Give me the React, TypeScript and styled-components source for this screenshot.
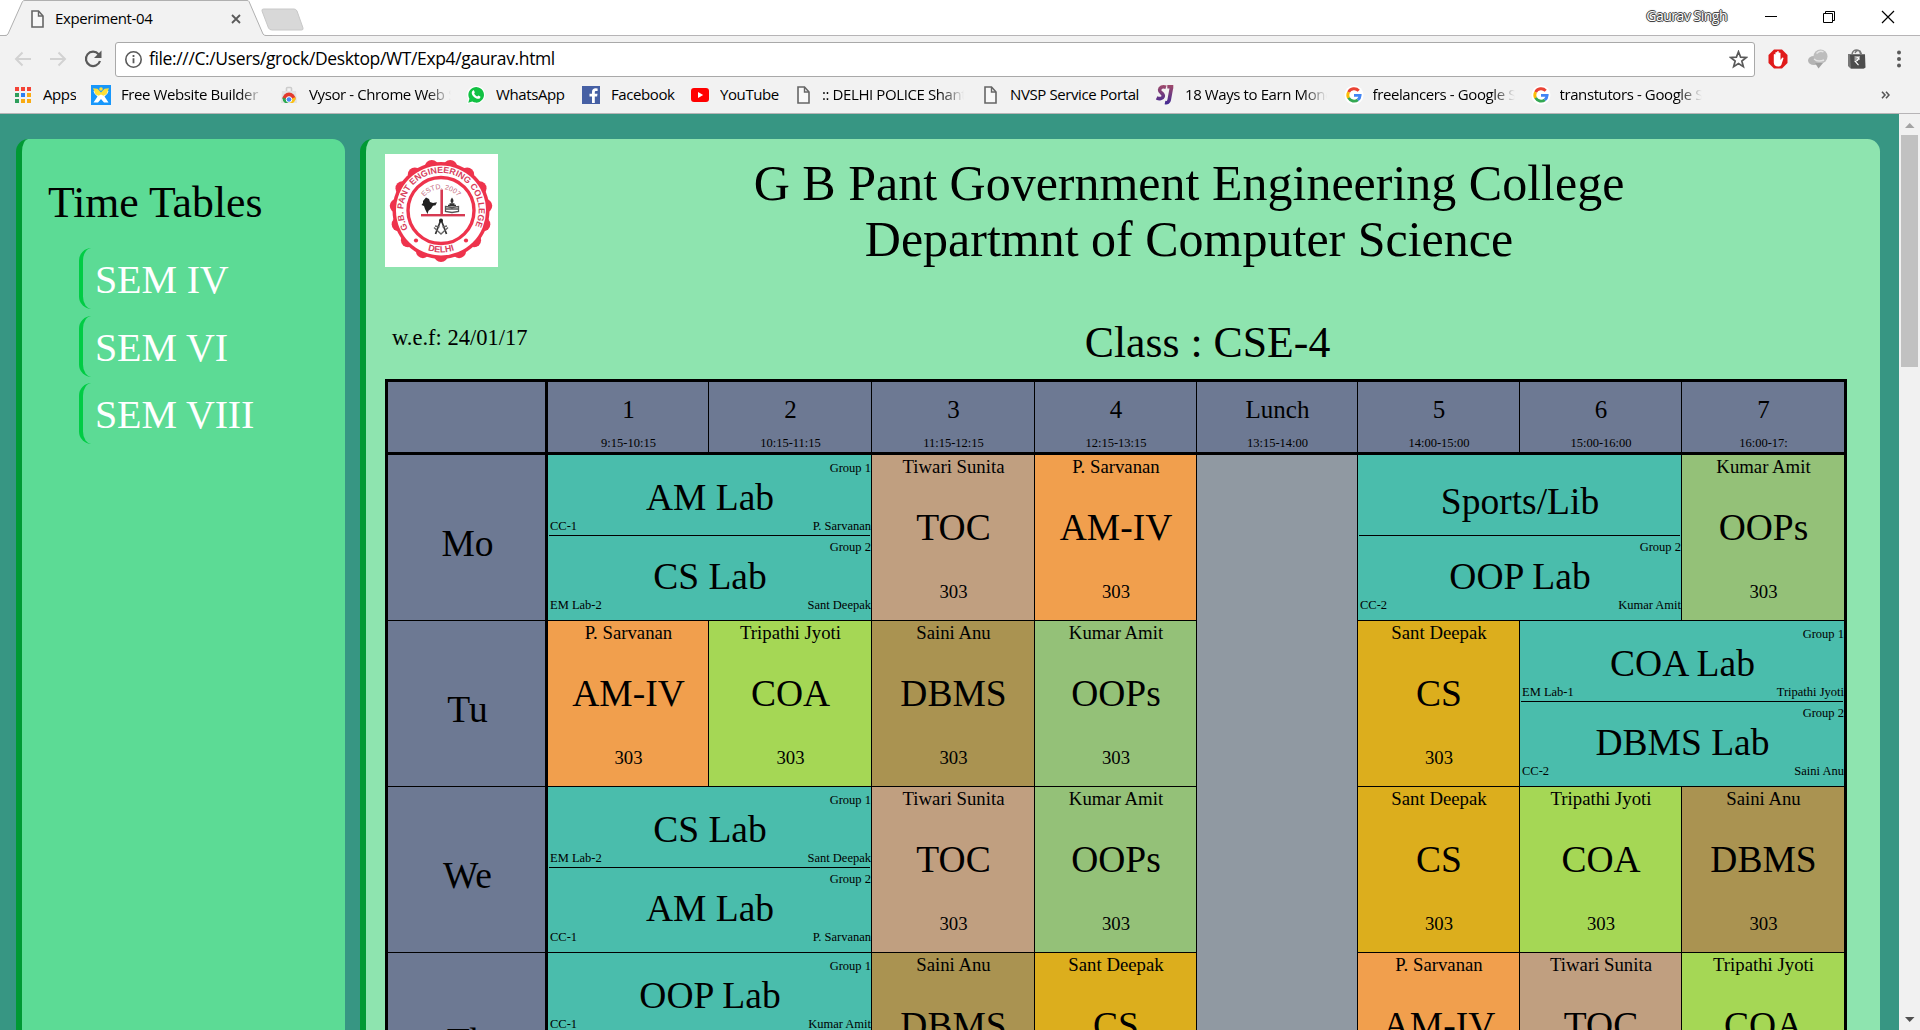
import React from "react";
import styled, { createGlobalStyle } from "styled-components";

const GlobalStyle = createGlobalStyle`
  *, *::before, *::after { box-sizing: border-box; }
  html, body { margin: 0; padding: 0; overflow: hidden; }
  body { font-family: "Liberation Serif", "Times New Roman", serif; color: #000; }
`;

const UI_FONT = `"Open Sans", "Noto Sans", sans-serif`;

const Window = styled.div`
  width: 1920px;
  height: 1030px;
  display: flex;
  flex-direction: column;
  overflow: hidden;
  background: #f2f2f2;
`;

/* ---------- Browser chrome ---------- */

const TabStrip = styled.div`
  display: flex;
  height: 36px;
  flex: none;
  background: #fff;
  box-shadow: inset 0 -1px 0 #b6b4b6;
  font-family: ${UI_FONT};
`;

const Tab = styled.div`
  position: relative;
  width: 272px;
  height: 36px;
  display: flex;
  align-items: center;
  padding: 0 31px 0 31px;
`;

const TabShape = styled.svg`
  position: absolute;
  left: 0;
  top: 0;
`;

const TabTitle = styled.span`
  position: relative;
  flex: 1;
  margin-left: 11px;
  font-size: 15px;
  line-height: 20px;
  letter-spacing: -0.4px;
  white-space: nowrap;
`;

const TabIcon = styled.span`
  position: relative;
  display: flex;
  padding-top: 2px;
`;

const NewTab = styled.svg`
  margin: 8px 0 0 -12px;
`;

const WindowControls = styled.div`
  margin-left: auto;
  display: flex;
  padding-right: 25px;
`;

const UserName = styled.span`
  font-size: 14px;
  line-height: 20px;
  padding-top: 6px;
  margin-right: 37px;
  letter-spacing: -0.5px;
  white-space: nowrap;
  color: #fff;
  text-shadow: -1px 0 #444, 1px 0 #444, 0 -1px #444, 0 1px #444, 0 0 2px #444;
`;

const ControlGlyph = styled.svg<{ $gap?: number }>`
  margin-top: 10px;
  margin-left: ${(p) => p.$gap ?? 0}px;
`;

const Toolbar = styled.div`
  display: flex;
  align-items: center;
  height: 44px;
  flex: none;
  padding: 2px 17px 0 13px;
  font-family: ${UI_FONT};
`;

const NavIcon = styled.svg<{ $before?: number; $after?: number }>`
  flex: none;
  margin-left: ${(p) => p.$before ?? 0}px;
  margin-right: ${(p) => p.$after ?? 0}px;
`;

const Omnibox = styled.div`
  display: flex;
  align-items: center;
  width: 1640px;
  flex: none;
  height: 35px;
  padding: 0 6px 0 8px;
  background: #fff;
  border: 1px solid #a9a9a9;
  border-radius: 3px;
`;

const Url = styled.span`
  flex: 1;
  margin-left: 6px;
  padding-bottom: 2px;
  font-size: 17.5px;
  line-height: 24px;
  letter-spacing: -0.37px;
  white-space: nowrap;
`;

const BookmarkBar = styled.div`
  display: flex;
  align-items: center;
  height: 34px;
  flex: none;
  padding: 0 30px 4px 13px;
  border-bottom: 1px solid #b6b4b6;
  font-family: ${UI_FONT};
`;

const Bookmark = styled.div<{ $w: number }>`
  display: flex;
  align-items: center;
  width: ${(p) => p.$w}px;
  flex: none;
`;

const BookmarkIcon = styled.span`
  display: flex;
  justify-content: center;
  width: 20px;
  margin-right: 10px;
  flex: none;
`;

const BookmarkLabel = styled.span<{ $fade?: boolean; $shift?: number }>`
  margin-left: ${(p) => p.$shift ?? 0}px;
  padding-bottom: 1px;
  font-size: 15px;
  line-height: 20px;
  letter-spacing: -0.4px;
  white-space: nowrap;
  overflow: hidden;
  max-width: 142px;
  ${(p) => p.$fade && "mask-image: linear-gradient(to right, #000 118px, transparent 142px);"}
`;

const Overflow = styled.svg`
  margin-left: auto;
`;

/* ---------- Page ---------- */

const Viewport = styled.div`
  display: flex;
  flex: 1;
  min-height: 0;
`;

const Page = styled.div`
  display: flex;
  align-items: flex-start;
  width: 1899px;
  height: 916px;
  padding: 25px 19px 0 16px;
  gap: 15px;
  overflow: hidden;
  background: #379683;
`;

const Panel = styled.section`
  height: 1100px;
  border-left: 6px solid #009933;
  border-radius: 12.5px;
`;

const Sidebar = styled(Panel)`
  width: 329px;
  padding: 38px 0 0 26px;
  background: #5cdb95;
`;

const SidebarTitle = styled.h2`
  margin: 0 0 21px;
  font-size: 43.75px;
  font-weight: 400;
  line-height: 50px;
`;

const SemList = styled.nav`
  display: flex;
  flex-direction: column;
  gap: 6.25px;
  margin-left: 31px;
`;

const SemLink = styled.a`
  height: 61.25px;
  padding: 1px 0 0 12px;
  border-left: 4px solid #00cc44;
  border-radius: 12.5px;
  color: #fff;
  font-size: 40px;
  line-height: 61px;
  letter-spacing: -0.15px;
`;

const Main = styled(Panel)`
  width: 1520px;
  padding: 15px 33px 0 19px;
  background: #8ee4af;
`;

const Masthead = styled.header`
  display: flex;
  height: 113px;
  margin-right: -33px;
`;

const CollegeTitle = styled.h1`
  flex: 1;
  margin: 0;
  padding-top: 1px;
  font-size: 50px;
  font-weight: 400;
  line-height: 56px;
  text-align: center;
`;

const InfoRow = styled.div`
  display: flex;
  height: 112px;
  margin-right: -33px;
`;

const Effective = styled.div`
  width: 150px;
  padding: 58px 0 0 7px;
  font-size: 22.5px;
  line-height: 26px;
  white-space: nowrap;
`;

const ClassName = styled.div`
  flex: 1;
  padding-top: 50px;
  font-size: 43.75px;
  line-height: 50px;
  text-align: center;
`;

const Table = styled.div`
  display: grid;
  width: 1462px;
  grid-template-columns: 160px 161px 163px 163px 162px 161px 162px 162px 162px;
  grid-template-rows: 73px repeat(4, 166px);
  border: 3px solid #000;
`;

const Cell = styled.div<{ $bg: string; $span?: number; $rows?: number; $last?: boolean }>`
  grid-column: span ${(p) => p.$span ?? 1};
  grid-row: span ${(p) => p.$rows ?? 1};
  min-width: 0;
  padding-left: 1px;
  border-right: ${(p) => (p.$last ? 0 : 1)}px solid #000;
  border-bottom: 1px solid #000;
  background: ${(p) => p.$bg};
  text-align: center;
`;

const HeadCell = styled(Cell)`
  padding-top: 14px;
  border-bottom-width: 3px;
`;

const Corner = styled(HeadCell)`
  border-right-width: 3px;
`;

const Period = styled.div`
  font-size: 25px;
  line-height: 28px;
`;

const Hours = styled.div`
  margin-top: 12px;
  font-size: 12.5px;
  line-height: 14px;
`;

const DayCell = styled(Cell)`
  display: flex;
  align-items: center;
  justify-content: center;
  padding: 11px 0 0 2px;
  border-right-width: 3px;
  font-size: 37.5px;
`;

const Teacher = styled.div`
  padding-top: 1px;
  font-size: 18.75px;
  line-height: 22px;
`;

const Subject = styled.div`
  font-size: 37.5px;
  line-height: 99px;
`;

const Room = styled.div`
  padding-top: 4px;
  font-size: 18.75px;
  line-height: 22px;
`;

const LabHalf = styled.div<{ $second?: boolean }>`
  display: flex;
  flex-direction: column;
  height: ${(p) => (p.$second ? 84 : 80)}px;
  padding-top: ${(p) => (p.$second ? 4 : 6)}px;
  font-size: 12.5px;
  line-height: 14px;
`;

const Group = styled.div`
  text-align: right;
`;

const LabName = styled.div<{ $solo?: boolean }>`
  padding-top: ${(p) => (p.$solo ? 19 : 1)}px;
  font-size: 37.5px;
  line-height: 43px;
`;

const LabFoot = styled.div`
  display: flex;
  justify-content: space-between;
  padding-left: 1px;
`;

const Divider = styled.div`
  height: 1px;
  margin-right: 1px;
  background: #000;
`;

/* ---------- Scrollbar ---------- */

const Scrollbar = styled.div`
  display: flex;
  flex-direction: column;
  align-items: center;
  width: 21px;
  background: #f1f1f1;
`;

const ScrollArrow = styled.svg`
  display: block;
  flex: none;
`;

const Thumb = styled.div`
  width: 17px;
  height: 232px;
  margin-bottom: auto;
  background: #c1c1c1;
`;

/* ---------- Icons ---------- */

const DocIcon = ({ w = 13, h = 18 }: { w?: number; h?: number }) => (
  <svg width={w} height={h} viewBox="0 0 13 18">
    <path d="M1 1h6.5l4.5 5v11H1z" fill="#f8f8f8" stroke="#666" strokeWidth="1.6" />
    <path d="M7.5 1v5H12" fill="none" stroke="#666" strokeWidth="1.4" />
  </svg>
);

const AppsIcon = () => {
  const colors = ["#f44336", "#f44336", "#f44336", "#2e9e5b", "#2d7ff0", "#f9ab12", "#2e9e5b", "#f9ab12", "#f9ab12"];
  return (
    <svg width="16" height="16" viewBox="0 0 16 16">
      {colors.map((c, i) => (
        <rect key={i} x={(i % 3) * 6} y={Math.floor(i / 3) * 6} width="4" height="4" fill={c} />
      ))}
    </svg>
  );
};

const WixIcon = () => (
  <svg width="20" height="20" viewBox="0 0 20 20">
    <rect width="20" height="20" fill="#1797fb" />
    <path d="M3.500 8.500L2.500 6h5L10 9l2.500-3h5l-1 2.500-3 3L17.500 17.500h-4.500L10 14l-3 3.500H2.500l4-6z" fill="#fff" />
    <path d="M2 3.200l4.500.5L10 7.500l3.500-3.800 4.500-.5-2.500 6-3 1.600L10 9.500l-2.500 1.300-3-1.600z" fill="#fde03a" />
    <circle cx="10" cy="4" r="1.800" fill="#fde03a" />
  </svg>
);

const VysorIcon = () => (
  <svg width="16" height="18" viewBox="0 0 16 18">
    <path d="M5.500 5V2.500a1 1 0 0 1 1-1h3a1 1 0 0 1 1 1V5" fill="none" stroke="#ccc" strokeWidth="1.600" />
    <path d="M1 5h14l1 12H0z" fill="#e2e2e2" />
    <path d="M1.500 13a6.500 6.500 0 0 1 13 0l-.5 1H8z" fill="#e33b2e" />
    <path d="M1.500 11.500A6.500 6.500 0 0 0 4 17h4l-2-4z" fill="#2da94f" />
    <path d="M14.500 11A6.500 6.500 0 0 1 12 17H7l3-4z" fill="#fbc116" />
    <circle cx="8" cy="13.500" r="2.800" fill="#4a8af4" stroke="#fff" />
  </svg>
);

const WhatsAppIcon = () => (
  <svg width="20" height="20" viewBox="0 0 20 20">
    <path d="M1 19l1.300-4.700A9 9 0 1 1 5.800 17.700z" fill="#fff" />
    <path d="M2.300 17.700l1.100-4A7.800 7.800 0 1 1 6.300 16.600z" fill="#12c143" />
    <path d="M6.900 5.500c.5-.4 1-.2 1.200.2l.7 1.600c.1.400-.7 1.200-.6 1.400.6 1.200 1.700 2.200 3 2.800.3.100 1-1 1.300-.9l1.700.8c.4.300.2 1.300-.3 1.800-1 .9-2.500.8-4.400-.3-1.700-1-3-2.400-3.600-4-.4-1.400 0-2.700 1-3.400z" fill="#fff" />
  </svg>
);

const FacebookIcon = () => (
  <svg width="18" height="18" viewBox="0 0 18 18">
    <rect width="18" height="18" fill="#4660a4" />
    <path d="M10 17V10.500H7.500V7.800H10V6c0-2.500 1.400-3.700 3.600-3.700l2 .1v2.500h-1.300c-1.100 0-1.500.5-1.500 1.400v1.500h2.700l-.4 2.700h-2.300V17z" fill="#fff" />
  </svg>
);

const YouTubeIcon = () => (
  <svg width="18" height="14" viewBox="0 0 18 14">
    <rect width="18" height="14" rx="3" fill="#f00" />
    <path d="M7 4l5.200 3L7 10z" fill="#fff" />
  </svg>
);

const SjIcon = () => (
  <svg width="20" height="21" viewBox="0 0 20 21">
    <defs>
      <linearGradient id="sj" gradientUnits="userSpaceOnUse" x1="0" y1="1" x2="0" y2="20">
        <stop offset="0" stopColor="#a04a6a" />
        <stop offset="1" stopColor="#432a94" />
      </linearGradient>
    </defs>
    <path
      d="M11 3.300C7.500 2 4.800 3.500 4.600 6c-.2 2.800 4.500 3.400 3.600 6.600-.6 2.200-3.700 2.600-6.600 1.200M12.300 2.800h6M16.600 2.800l-2.400 13c-.4 2.300-1.900 3.300-4.200 2.800"
      fill="none"
      stroke="url(#sj)"
      strokeWidth="3.600"
    />
  </svg>
);

const GoogleIcon = () => (
  <svg width="20" height="20" viewBox="0 0 20 20">
    <circle cx="10" cy="10" r="9.500" fill="#fff" />
    <g fill="none" strokeWidth="2.900">
      <path d="M14.700 5.700A6.200 6.200 0 0 0 4.600 7.200" stroke="#ea4335" />
      <path d="M4.600 7.100a6.200 6.200 0 0 0 0 6" stroke="#fbbc05" />
      <path d="M4.600 12.900a6.200 6.200 0 0 0 9.300 1.900" stroke="#34a853" />
      <path d="M13.800 14.900a6.200 6.200 0 0 0 2.300-4.500H10" stroke="#4285f4" />
    </g>
  </svg>
);

const RED = "#ee334c";

const CollegeLogo = () => (
  <svg width="113" height="113" viewBox="0 0 113 113">
    <defs>
      <path id="ringTop" d="M23.200 74.900A37.600 37.600 0 1 1 88.800 74.900" />
      <path id="ringBottom" d="M26 86A42.500 42.500 0 0 0 86 86" />
      <path id="ringInner" d="M34 57A22 22 0 0 1 78 57" />
    </defs>
    <rect width="113" height="113" fill="#fff" />
    <circle cx="56" cy="56.500" r="48.500" fill={RED} />
    {Array.from({ length: 15 }, (_, i) => {
      const a = (Math.PI * 2 * i) / 15 + Math.PI / 2;
      return <circle key={i} cx={56 + 44.500 * Math.cos(a)} cy={56.500 + 44.500 * Math.sin(a)} r="7" fill={RED} />;
    })}
    <circle cx="56" cy="56.500" r="45" fill="#fff" />
    <circle cx="56" cy="56.500" r="33" fill="#fff" stroke={RED} strokeWidth="3.400" />
    <g fontFamily="Liberation Sans, Arial, sans-serif" fill="#d8405c">
      <text fontSize="8.800" fontWeight="700">
        <textPath href="#ringTop" textLength="153" lengthAdjust="spacingAndGlyphs">G.B. PANT ENGINEERING COLLEGE</textPath>
      </text>
      <text fontSize="9" fontWeight="700" textAnchor="middle">
        <textPath href="#ringBottom" startOffset="50%">DELHI</textPath>
      </text>
      <text fontSize="7" textAnchor="middle" fill="#c46a7c">
        <textPath href="#ringInner" startOffset="50%">ESTD. 2007</textPath>
      </text>
    </g>
    <circle cx="31" cy="86.500" r="2.100" fill={RED} />
    <circle cx="81" cy="86.500" r="2.100" fill={RED} />
    <rect x="36" y="60" width="44" height="2.400" fill="#d63a52" />
    <rect x="55.400" y="35.500" width="2.600" height="26" fill="#d63a52" />
    <path d="M38 47l3-3.500 3 1.500 1 3 3 1 4-.8-1.500 3-2.500.5-2 3-2.500 2-1 3.300-2.500-5-1-3-2.500-1 1.500-2z" fill="#222" />
    <g fill="none" stroke="#555">
      <path d="M60.500 52.500l6.500 1 6.500-1v5L67 58.500l-6.500-1zM61 55h12" strokeWidth="1.300" />
      <path d="M63 51.500h8M64.500 50h5" stroke="#333" strokeWidth="1.600" />
    </g>
    <path d="M67 43.500c2 2.500 2 4.500 0 6-2-1.500-2-3.500 0-6z" fill="#333" />
    <g fill="none" stroke="#333">
      <path d="M56 65.500L50.500 80M56 65.500L61.500 80" strokeWidth="1.700" />
      <path d="M49 73.500l7 6.500 7-6.500M50 72l4.500 1M62 72l-4.500 1" stroke="#666" strokeWidth="1.300" />
    </g>
    <circle cx="56" cy="66.500" r="2" fill="#222" />
  </svg>
);

/* ---------- Data ---------- */

type BookmarkItem = { label: string; width: number; icon: React.ReactNode; fade?: boolean; shift?: number };

const bookmarks: BookmarkItem[] = [
  { label: "Apps", width: 78, icon: <AppsIcon /> },
  { label: "Free Website Builder |", width: 188, icon: <WixIcon />, fade: true },
  { label: "Vysor - Chrome Web S", width: 187, icon: <VysorIcon />, fade: true },
  { label: "WhatsApp", width: 115, icon: <WhatsAppIcon /> },
  { label: "Facebook", width: 109, icon: <FacebookIcon /> },
  { label: "YouTube", width: 103, icon: <YouTubeIcon /> },
  { label: ":: DELHI POLICE Shanti", width: 187, icon: <DocIcon />, fade: true, shift: -1 },
  { label: "NVSP Service Portal", width: 175, icon: <DocIcon /> },
  { label: "18 Ways to Earn Mone", width: 189, icon: <SjIcon />, fade: true },
  { label: "freelancers - Google S", width: 187, icon: <GoogleIcon />, fade: true, shift: -1.500 },
  { label: "transtutors - Google S", width: 190, icon: <GoogleIcon />, fade: true, shift: -1.500 },
];

const SLATE = "#6d7993";
const LUNCH = "#9099a2";
const LAB = "#4abdac";

const periods: [string, string][] = [
  ["1", "9:15-10:15"],
  ["2", "10:15-11:15"],
  ["3", "11:15-12:15"],
  ["4", "12:15-13:15"],
  ["Lunch", "13:15-14:00"],
  ["5", "14:00-15:00"],
  ["6", "15:00-16:00"],
  ["7", "16:00-17:"],
];

const subjects = {
  TOC: { teacher: "Tiwari Sunita", bg: "#c09f80" },
  "AM-IV": { teacher: "P. Sarvanan", bg: "#f19f4d" },
  OOPs: { teacher: "Kumar Amit", bg: "#94c178" },
  COA: { teacher: "Tripathi Jyoti", bg: "#a5d755" },
  DBMS: { teacher: "Saini Anu", bg: "#aa9351" },
  CS: { teacher: "Sant Deepak", bg: "#dcae1d" },
};

type Code = keyof typeof subjects;
type Lab = { name: string; room?: string; teacher?: string };
type Slot = Code | "lunch" | [Lab, Lab];

const amLab: Lab = { name: "AM Lab", room: "CC-1", teacher: "P. Sarvanan" };
const csLab: Lab = { name: "CS Lab", room: "EM Lab-2", teacher: "Sant Deepak" };

const week: { day: string; slots: Slot[] }[] = [
  {
    day: "Mo",
    slots: [[amLab, csLab], "TOC", "AM-IV", "lunch", [{ name: "Sports/Lib" }, { name: "OOP Lab", room: "CC-2", teacher: "Kumar Amit" }], "OOPs"],
  },
  {
    day: "Tu",
    slots: [
      "AM-IV", "COA", "DBMS", "OOPs", "CS",
      [{ name: "COA Lab", room: "EM Lab-1", teacher: "Tripathi Jyoti" }, { name: "DBMS Lab", room: "CC-2", teacher: "Saini Anu" }],
    ],
  },
  { day: "We", slots: [[csLab, amLab], "TOC", "OOPs", "CS", "COA", "DBMS"] },
  {
    day: "Th",
    slots: [[{ name: "OOP Lab", room: "CC-1", teacher: "Kumar Amit" }, csLab], "DBMS", "CS", "AM-IV", "TOC", "COA"],
  },
];

const LabBlock = ({ lab, index }: { lab: Lab; index: number }) => (
  <LabHalf $second={index === 1}>
    {lab.room && <Group>Group {index + 1}</Group>}
    <LabName $solo={!lab.room}>{lab.name}</LabName>
    {lab.room && (
      <LabFoot>
        <span>{lab.room}</span>
        <span>{lab.teacher}</span>
      </LabFoot>
    )}
  </LabHalf>
);

const SlotCell = ({ slot, last }: { slot: Slot; last: boolean }) => {
  if (slot === "lunch") return <Cell $bg={LUNCH} $rows={4} />;
  if (typeof slot === "string") {
    const s = subjects[slot];
    return (
      <Cell $bg={s.bg} $last={last}>
        <Teacher>{s.teacher}</Teacher>
        <Subject>{slot}</Subject>
        <Room>303</Room>
      </Cell>
    );
  }
  return (
    <Cell $bg={LAB} $span={2} $last={last}>
      <LabBlock lab={slot[0]} index={0} />
      <Divider />
      <LabBlock lab={slot[1]} index={1} />
    </Cell>
  );
};

export default function App() {
  return (
    <Window>
      <GlobalStyle />
      <TabStrip>
        <Tab>
          <TabShape width="272" height="36" viewBox="0 0 272 36">
            <path d="M6 36L8 34 22.500 1.500Q23 .5 25 .5H247Q248.500 .5 249 1.500L263 34 266 36z" fill="#f2f2f2" />
            <path d="M0 35.500H5Q7 35.500 8 34L22.500 1.500Q23 .5 25 .5H247Q248.500 .5 249 1.500L263 34Q264 35.500 266 35.500H272" fill="none" stroke="#b0b0b0" />
          </TabShape>
          <TabIcon>
            <DocIcon w={13} h={18} />
          </TabIcon>
          <TabTitle>Experiment-04</TabTitle>
          <TabIcon>
            <svg width="10" height="10" viewBox="0 0 10 10">
              <path d="M1 1l8 8M9 1L1 9" stroke="#5a5a5a" strokeWidth="1.800" />
            </svg>
          </TabIcon>
        </Tab>
        <NewTab width="46" height="24" viewBox="0 0 46 24">
          <path d="M3.500 1H34Q36 1 37 3L43 20Q43.500 22 41.500 22H12Q9.500 22 8.500 20L2 3Q1.500 1 3.500 1z" fill="#d8d8d8" stroke="#c8c8c8" />
        </NewTab>
        <WindowControls>
          <UserName>Gaurav Singh</UserName>
          <ControlGlyph width="14" height="14">
            <path d="M1 6.500h12" stroke="#000" />
          </ControlGlyph>
          <ControlGlyph width="14" height="14" $gap={44}>
            <path d="M1.500 3.500h9v9h-9zM3.500 3.500v-2h9v9h-2" fill="none" stroke="#000" />
          </ControlGlyph>
          <ControlGlyph width="14" height="14" $gap={45}>
            <path d="M1 1l12 12M13 1L1 13" stroke="#000" strokeWidth="1.200" />
          </ControlGlyph>
        </WindowControls>
      </TabStrip>

      <Toolbar>
        <NavIcon width="20" height="20" $after={15}>
          <path d="M18 10H3M9.500 3.500L3 10l6.500 6.500" fill="none" stroke="#d2d2d2" strokeWidth="2" />
        </NavIcon>
        <NavIcon width="20" height="20" $after={15}>
          <path d="M2 10h15M10.500 3.500L17 10l-6.500 6.500" fill="none" stroke="#d2d2d2" strokeWidth="2" />
        </NavIcon>
        <NavIcon width="20" height="20" $after={12}>
          <path d="M15.600 5.200A7.200 7.200 0 1 0 17 12" fill="none" stroke="#5a5a5a" strokeWidth="2.200" />
          <path d="M18.500 1.500v7.500H11z" fill="#5a5a5a" />
        </NavIcon>
        <Omnibox>
          <NavIcon width="19" height="19">
            <circle cx="9.500" cy="9.500" r="7.700" fill="none" stroke="#5a5a5a" strokeWidth="1.600" />
            <path d="M9.500 8.300v5M9.500 5v2" stroke="#5a5a5a" strokeWidth="1.800" />
          </NavIcon>
          <Url>file:///C:/Users/grock/Desktop/WT/Exp4/gaurav.html</Url>
          <NavIcon width="19" height="19" viewBox="0 0 20 20">
            <path d="M10 1.800l2.200 5.700 6 .3-4.700 3.800 1.600 5.900L10 14.200l-5.100 3.300 1.600-5.900L1.800 7.800l6-.3z" fill="none" stroke="#5a5a5a" strokeWidth="1.800" />
          </NavIcon>
        </Omnibox>
        <NavIcon width="20" height="20" viewBox="0 0 20 20" $before={13} $after={19}>
          <path d="M6 .5h8L19.500 6v8L14 19.500H6L.5 14V6z" fill="#e01a1a" />
          <path d="M5.800 11V5.500q.9-1 1.600 0V9V3.500q.9-1.200 1.700 0V8.500 2.500q.9-1 1.700 0V8.500 4q.9-1 1.700 0v7l1.600-2.300q1.200-.7 1.400.5L13.300 16q-1 1.500-3 1.500-4.500 0-4.500-4z" fill="#fff" />
        </NavIcon>
        <NavIcon width="22" height="20" viewBox="0 0 22 20" $after={18}>
          <ellipse cx="7" cy="11.500" rx="6" ry="4.500" fill="#b4b4b4" />
          <circle cx="13.500" cy="7.500" r="7" fill="#bdbdbd" />
          <path d="M8 14h8l-4.500 5.500z" fill="#a0a0a0" />
          <path d="M9.500 4.500q3.500-3.500 7-1.500M7 10q4 3.500 10 1" fill="none" stroke="#e4e4e4" strokeWidth="1.400" />
        </NavIcon>
        <NavIcon width="20" height="20" viewBox="0 0 20 20" $after={29}>
          <path d="M5 5q1-4 4.500-4t4 4M8 4q2-4 5-2l1.500 3" fill="none" stroke="#777" strokeWidth="1.400" />
          <path d="M1 5h17v13l-1.500 1.500H3.500L1 17z" fill="#777" />
          <path d="M3 6h15l.5 12.500-1.500 1H4z" fill="#4d4d4d" />
          <path d="M7.500 8h5.500M7.500 10h5.500M8.500 8q3.500.2 3 2T8 12.200l3.500 4" fill="none" stroke="#fff" strokeWidth="1.100" />
        </NavIcon>
        <NavIcon width="6" height="20">
          <circle cx="3" cy="3.500" r="2" fill="#5a5a5a" />
          <circle cx="3" cy="10" r="2" fill="#5a5a5a" />
          <circle cx="3" cy="16.500" r="2" fill="#5a5a5a" />
        </NavIcon>
      </Toolbar>

      <BookmarkBar>
        {bookmarks.map((b) => (
          <Bookmark key={b.label} $w={b.width}>
            <BookmarkIcon>{b.icon}</BookmarkIcon>
            <BookmarkLabel $fade={b.fade} $shift={b.shift}>{b.label}</BookmarkLabel>
          </Bookmark>
        ))}
        <Overflow width="9" height="8" viewBox="0 0 9 8">
          <path d="M1 .7L4 4 1 7.300M5 .7L8 4 5 7.300" fill="none" stroke="#555" strokeWidth="1.600" />
        </Overflow>
      </BookmarkBar>

      <Viewport>
        <Page>
          <Sidebar as="aside">
            <SidebarTitle>Time Tables</SidebarTitle>
            <SemList>
              <SemLink>SEM IV</SemLink>
              <SemLink>SEM VI</SemLink>
              <SemLink>SEM VIII</SemLink>
            </SemList>
          </Sidebar>
          <Main as="main">
            <Masthead>
              <CollegeLogo />
              <CollegeTitle>
                G B Pant Government Engineering College
                <br />
                Departmnt of Computer Science
              </CollegeTitle>
            </Masthead>
            <InfoRow>
              <Effective>w.e.f: 24/01/17</Effective>
              <ClassName>Class : CSE-4</ClassName>
            </InfoRow>
            <Table>
              <Corner $bg={SLATE} />
              {periods.map(([name, hours], i) => (
                <HeadCell key={name} $bg={SLATE} $last={i === periods.length - 1}>
                  <Period>{name}</Period>
                  <Hours>{hours}</Hours>
                </HeadCell>
              ))}
              {week.map(({ day, slots }) => (
                <React.Fragment key={day}>
                  <DayCell $bg={SLATE}>{day}</DayCell>
                  {slots.map((slot, i) => (
                    <SlotCell key={i} slot={slot} last={i === slots.length - 1} />
                  ))}
                </React.Fragment>
              ))}
            </Table>
          </Main>
        </Page>
        <Scrollbar>
          <ScrollArrow width="21" height="21">
            <path d="M6 14h9.500L10.700 9z" fill="#a3a3a3" />
          </ScrollArrow>
          <Thumb />
          <ScrollArrow width="21" height="21">
            <path d="M6 8h9.500L10.700 13z" fill="#505050" />
          </ScrollArrow>
        </Scrollbar>
      </Viewport>
    </Window>
  );
}
